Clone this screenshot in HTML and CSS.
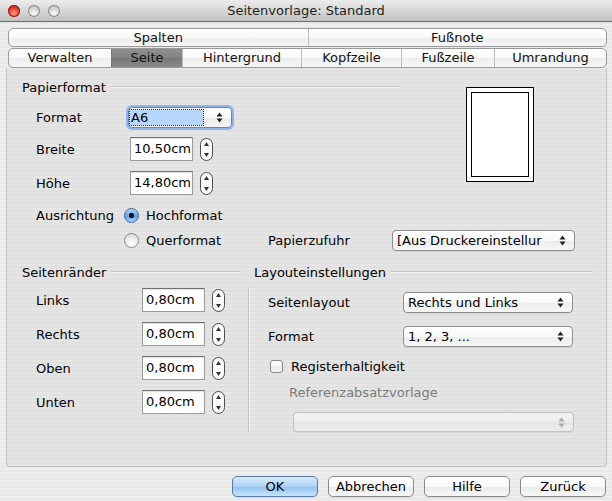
FILE: index.html
```html
<!DOCTYPE html>
<html lang="de">
<head>
  <meta charset="UTF-8" />
  <title>Seitenvorlage: Standard</title>
  <link rel="stylesheet" href="styles.css">
</head>
<body>
  <div class="window">
    <div class="titlebar">
      <div class="lights">
        <span class="light close"></span>
        <span class="light"></span>
        <span class="light"></span>
      </div>
      <div class="title">Seitenvorlage: Standard</div>
      <div></div>
    </div>

    <div class="tabs">
      <div class="tab-row row-top">
        <div class="tab">Spalten</div>
        <div class="tab">Fußnote</div>
      </div>
      <div class="tab-row row-main">
        <div class="tab">Verwalten</div>
        <div class="tab active">Seite</div>
        <div class="tab">Hintergrund</div>
        <div class="tab">Kopfzeile</div>
        <div class="tab">Fußzeile</div>
        <div class="tab">Umrandung</div>
      </div>
    </div>

    <div class="panel">
      <!-- Papierformat -->
      <div class="paper">
        <div class="group-head"><span>Papierformat</span><i class="rule"></i></div>

        <div class="preview"><div class="preview-inner"></div></div>

        <div class="row r-format">
          <span class="lbl">Format</span>
          <div class="select focus sel-a6">
            <span class="sel-text">A6</span>
            <svg class="arrows" width="7" height="11" viewBox="0 0 7 11"><path d="M0.5 4.5 L3.5 0.5 L6.5 4.5 Z"/><path d="M0.5 6.5 L3.5 10.5 L6.5 6.5 Z"/></svg>
          </div>
        </div>

        <div class="row r-size">
          <span class="lbl">Breite</span>
          <span class="field">10,50cm</span>
          <svg class="spin" width="13" height="23" viewBox="0 0 13 23"><rect x="0.5" y="0.5" width="12" height="22" rx="6" fill="#fbfbfb" stroke="#4d4d4d"/><path d="M4 8 L6.5 4 L9 8 Z" fill="#333"/><path d="M4 15 L6.5 19 L9 15 Z" fill="#333"/></svg>
        </div>

        <div class="row r-size r-height">
          <span class="lbl">Höhe</span>
          <span class="field">14,80cm</span>
          <svg class="spin" width="13" height="23" viewBox="0 0 13 23"><rect x="0.5" y="0.5" width="12" height="22" rx="6" fill="#fbfbfb" stroke="#4d4d4d"/><path d="M4 8 L6.5 4 L9 8 Z" fill="#333"/><path d="M4 15 L6.5 19 L9 15 Z" fill="#333"/></svg>
        </div>

        <div class="row r-orient">
          <span class="lbl">Ausrichtung</span>
          <span class="radio-opt"><span class="radio on"></span>Hochformat</span>
        </div>

        <div class="row r-feed">
          <span class="lbl"></span>
          <span class="radio-opt"><span class="radio"></span>Querformat</span>
          <span class="lbl-feed">Papierzufuhr</span>
          <div class="select sel-feed">
            <span class="sel-text">[Aus Druckereinstellur</span>
            <svg class="arrows" width="7" height="11" viewBox="0 0 7 11"><path d="M0.5 4.5 L3.5 0.5 L6.5 4.5 Z"/><path d="M0.5 6.5 L3.5 10.5 L6.5 6.5 Z"/></svg>
          </div>
        </div>
      </div>

      <div class="bottom">
        <!-- Seitenränder -->
        <div class="margins">
          <div class="group-head"><span>Seitenränder</span><i class="rule"></i></div>
          <div class="row">
            <span class="lbl">Links</span>
            <span class="field">0,80cm</span>
            <svg class="spin" width="13" height="23" viewBox="0 0 13 23"><rect x="0.5" y="0.5" width="12" height="22" rx="6" fill="#fbfbfb" stroke="#4d4d4d"/><path d="M4 8 L6.5 4 L9 8 Z" fill="#333"/><path d="M4 15 L6.5 19 L9 15 Z" fill="#333"/></svg>
          </div>
          <div class="row">
            <span class="lbl">Rechts</span>
            <span class="field">0,80cm</span>
            <svg class="spin" width="13" height="23" viewBox="0 0 13 23"><rect x="0.5" y="0.5" width="12" height="22" rx="6" fill="#fbfbfb" stroke="#4d4d4d"/><path d="M4 8 L6.5 4 L9 8 Z" fill="#333"/><path d="M4 15 L6.5 19 L9 15 Z" fill="#333"/></svg>
          </div>
          <div class="row">
            <span class="lbl">Oben</span>
            <span class="field">0,80cm</span>
            <svg class="spin" width="13" height="23" viewBox="0 0 13 23"><rect x="0.5" y="0.5" width="12" height="22" rx="6" fill="#fbfbfb" stroke="#4d4d4d"/><path d="M4 8 L6.5 4 L9 8 Z" fill="#333"/><path d="M4 15 L6.5 19 L9 15 Z" fill="#333"/></svg>
          </div>
          <div class="row">
            <span class="lbl">Unten</span>
            <span class="field">0,80cm</span>
            <svg class="spin" width="13" height="23" viewBox="0 0 13 23"><rect x="0.5" y="0.5" width="12" height="22" rx="6" fill="#fbfbfb" stroke="#4d4d4d"/><path d="M4 8 L6.5 4 L9 8 Z" fill="#333"/><path d="M4 15 L6.5 19 L9 15 Z" fill="#333"/></svg>
          </div>
        </div>

        <!-- Layouteinstellungen -->
        <div class="layout">
          <div class="group-head"><span>Layouteinstellungen</span><i class="rule"></i></div>
          <div class="layout-body">
            <div class="row">
              <span class="lbl">Seitenlayout</span>
              <div class="select sel-layout">
                <span class="sel-text">Rechts und Links</span>
                <svg class="arrows" width="7" height="11" viewBox="0 0 7 11"><path d="M0.5 4.5 L3.5 0.5 L6.5 4.5 Z"/><path d="M0.5 6.5 L3.5 10.5 L6.5 6.5 Z"/></svg>
              </div>
            </div>
            <div class="row r-numfmt">
              <span class="lbl">Format</span>
              <div class="select sel-layout">
                <span class="sel-text">1, 2, 3, ...</span>
                <svg class="arrows" width="7" height="11" viewBox="0 0 7 11"><path d="M0.5 4.5 L3.5 0.5 L6.5 4.5 Z"/><path d="M0.5 6.5 L3.5 10.5 L6.5 6.5 Z"/></svg>
              </div>
            </div>
            <div class="row r-check">
              <span class="check"></span>
              <span>Registerhaltigkeit</span>
            </div>
            <div class="row r-ref">Referenzabsatzvorlage</div>
            <div class="select disabled sel-ref">
              <span class="sel-text"></span>
              <svg class="arrows" width="7" height="11" viewBox="0 0 7 11"><path d="M0.5 4.5 L3.5 0.5 L6.5 4.5 Z"/><path d="M0.5 6.5 L3.5 10.5 L6.5 6.5 Z"/></svg>
            </div>
          </div>
        </div>
      </div>
    </div>

    <div class="buttons">
      <div class="btn default">OK</div>
      <div class="btn">Abbrechen</div>
      <div class="btn">Hilfe</div>
      <div class="btn">Zurück</div>
    </div>
  </div>
</body>
</html>
```

FILE: styles.css
```css
body {
  margin: 0;
  font-family: 'DejaVu Sans', sans-serif;
  font-size: 13px;
  color: #000;
}

.window {
  width: 612px;
  height: 501px;
  overflow: hidden;
  background: repeating-linear-gradient(180deg, #eeeeee 0 2px, #e8e8e8 2px 4px);
}

/* title bar */
.titlebar {
  height: 22px;
  box-sizing: border-box;
  border-bottom: 1px solid #6a6a6a;
  background: linear-gradient(#ececec, #c2c2c2);
  display: grid;
  grid-template-columns: 1fr auto 1fr;
  align-items: center;
}

.lights {
  display: flex;
  gap: 8px;
  padding-left: 8px;
}

.light {
  width: 12px;
  height: 12px;
  border-radius: 50%;
  background: radial-gradient(circle at 50% 70%, #fafafa, #cfcfcf 55%, #a5a5a5);
  box-shadow: inset 0 0 0 1px #8c8c8c;
}

.light.close {
  background: radial-gradient(circle at 50% 70%, #ff9a8a, #e0382c 55%, #9b1a10);
  box-shadow: inset 0 0 0 1px #86251d;
}

.title {
  color: #1e1e1e;
}

/* tabs */
.tabs {
  margin: 6px 5px 0 8px;
}

.tab-row {
  display: grid;
  box-sizing: border-box;
  border: 1px solid #9a9a9a;
  border-radius: 5px;
  overflow: hidden;
  background: linear-gradient(#ffffff, #f8f8f8 50%, #ededed 51%, #f6f6f6);
}

.row-top {
  height: 19px;
  grid-template-columns: 1fr 1fr;
}

.row-main {
  height: 20px;
  margin-top: 1px;
  grid-template-columns: 102px 71px 119px 100px 93px 1fr;
}

.tab {
  text-align: center;
  line-height: 17px;
  color: #111;
  border-left: 1px solid #bdbdbd;
}

.row-main .tab {
  line-height: 18px;
}

.tab:first-child {
  border-left: none;
}

.tab.active {
  background: linear-gradient(#8e8e8e, #838383 50%, #777777 51%, #8a8a8a);
  border-left-color: #777;
}

/* panel */
.panel {
  margin: 0 5px 0 6px;
  height: 399px;
  box-sizing: border-box;
  border: 1px solid #c4c4c4;
  border-top: none;
  border-radius: 0 0 4px 4px;
  background: repeating-linear-gradient(180deg, #e5e5e5 0 2px, #e0e0e0 2px 4px);
  padding: 10px 0 0 15px;
}

.group-head {
  display: flex;
  align-items: center;
  gap: 5px;
  height: 18px;
}

.rule {
  flex: 1;
  border-top: 1px solid #c3c3c3;
  border-bottom: 1px solid #f6f6f6;
}

.row {
  display: flex;
  align-items: center;
}

.lbl {
  flex: none;
}

/* Papierformat */
.paper {
  display: grid;
  grid-template-columns: 378px 1fr;
}

.paper .row {
  grid-column: 1;
  padding-left: 14px;
}

.paper .lbl {
  width: 91px;
}

.preview {
  grid-column: 2;
  grid-row: 1 / span 5;
  align-self: start;
  margin: 9px 0 0 66px;
  width: 68px;
  height: 95px;
  box-sizing: border-box;
  border: 1px solid #000;
  background: #fff;
  padding: 4px;
}

.preview-inner {
  height: 100%;
  box-sizing: border-box;
  border: 1px solid #000;
}

.r-format {
  margin-top: 11px;
  height: 21px;
}

.r-size {
  margin-top: 9px;
  height: 24px;
}

.r-size .field {
  margin-left: 3px;
}

.r-height {
  margin-top: 10px;
}

.r-orient {
  margin-top: 11px;
  height: 18px;
}

.r-feed {
  grid-column: 1 / -1 !important;
  margin-top: 6px;
  height: 21px;
}

.radio-opt {
  display: flex;
  align-items: center;
  gap: 7px;
  width: 144px;
  margin-left: -3px;
}

.lbl-feed {
  width: 124px;
}

.sel-a6 {
  width: 104px;
  margin-left: 1px;
}

.sel-feed {
  width: 183px;
}

/* controls */
.select {
  display: flex;
  align-items: center;
  height: 21px;
  box-sizing: border-box;
  border: 1px solid #8d8d8d;
  border-radius: 4px;
  background: linear-gradient(#ffffff, #f9f9f9 50%, #ececec 51%, #f6f6f6);
  box-shadow: 0 1px 0 rgba(0, 0, 0, 0.06);
}

.sel-text {
  flex: 1;
  overflow: hidden;
  white-space: nowrap;
  padding-left: 4px;
}

.arrows {
  flex: none;
  margin: 0 8px 0 8px;
  fill: #222;
}

.select.focus {
  border-color: #5f87c2;
  box-shadow: 0 0 0 2px #8fb5ea;
}

.select.focus .sel-text {
  flex: 0 0 72px;
  height: 15px;
  line-height: 15px;
  padding-left: 1px;
  margin-left: 1px;
  background: #b7d6fc;
  outline: 1px dotted #222;
}

.select.focus .arrows {
  margin-left: auto;
}

.select.disabled {
  border-color: #c3c3c3;
  background: linear-gradient(#f3f3f3, #ececec 50%, #e5e5e5 51%, #ededed);
}

.select.disabled .arrows {
  fill: #a8a8a8;
}

.field {
  flex: none;
  width: 63px;
  height: 24px;
  box-sizing: border-box;
  border: 1px solid #9a9a9a;
  border-top-color: #707070;
  background: #fff;
  padding-left: 3px;
  line-height: 22px;
  overflow: hidden;
  white-space: nowrap;
  box-shadow: inset 0 1px 1px rgba(0, 0, 0, 0.12);
}

.spin {
  flex: none;
  margin-left: 7px;
}

.radio {
  flex: none;
  width: 15px;
  height: 15px;
  box-sizing: border-box;
  border-radius: 50%;
  border: 1px solid #8a8a8a;
  background: radial-gradient(circle at 50% 80%, #ffffff, #ebebeb 55%, #cfcfcf);
}

.radio.on {
  border-color: #3f66a0;
  background:
    radial-gradient(circle, #151515 0 2.3px, transparent 3px),
    linear-gradient(#b3d4f8, #6aa5ea 50%, #5b98e2 51%, #a9d3fb);
}

.check {
  flex: none;
  width: 13px;
  height: 13px;
  box-sizing: border-box;
  border: 1px solid #8a8a8a;
  border-radius: 3px;
  background: linear-gradient(#ffffff, #f3f3f3 50%, #e6e6e6 51%, #f4f4f4);
  margin: 0 8px 0 2px;
}

/* bottom half */
.bottom {
  display: flex;
  margin-top: 12px;
}

.margins {
  width: 226px;
  flex: none;
}

.margins .group-head {
  padding-right: 8px;
}

.margins .row {
  padding-left: 14px;
  height: 24px;
  margin-top: 10px;
}

.margins .group-head + .row {
  margin-top: 7px;
}

.margins .lbl {
  width: 106px;
}

.layout {
  width: 344px;
  flex: none;
}

.layout .group-head {
  padding-left: 6px;
}

.layout-body {
  margin-top: 6px;
  height: 145px;
  box-sizing: border-box;
  border-left: 1px solid #c3c3c3;
  box-shadow: inset 1px 0 0 #f6f6f6;
  padding: 5px 0 0 19px;
}

.layout .lbl {
  width: 135px;
}

.sel-layout {
  width: 170px;
}

.r-numfmt {
  margin-top: 13px;
}

.r-check {
  margin-top: 10px;
  height: 18px;
}

.r-ref {
  margin-top: 8px;
  height: 18px;
  padding-left: 21px;
  color: #7b7b7b;
}

.sel-ref {
  margin: 11px 0 0 25px;
  width: 281px;
  height: 20px;
}

/* buttons */
.buttons {
  display: flex;
  justify-content: flex-end;
  gap: 10px;
  padding: 9px 6px 0 0;
}

.btn {
  width: 86px;
  height: 21px;
  box-sizing: border-box;
  border: 1px solid #8b8b8b;
  border-radius: 5px;
  background: linear-gradient(#ffffff, #f8f8f8 50%, #ebebeb 51%, #f7f7f7);
  text-align: center;
  line-height: 19px;
  box-shadow: 0 1px 0 rgba(0, 0, 0, 0.08);
}

.btn.default {
  border-color: #5a7ba6;
  background: linear-gradient(#d6eafd, #aed3f8 50%, #90c2f4 51%, #c8e4fd);
}
```
